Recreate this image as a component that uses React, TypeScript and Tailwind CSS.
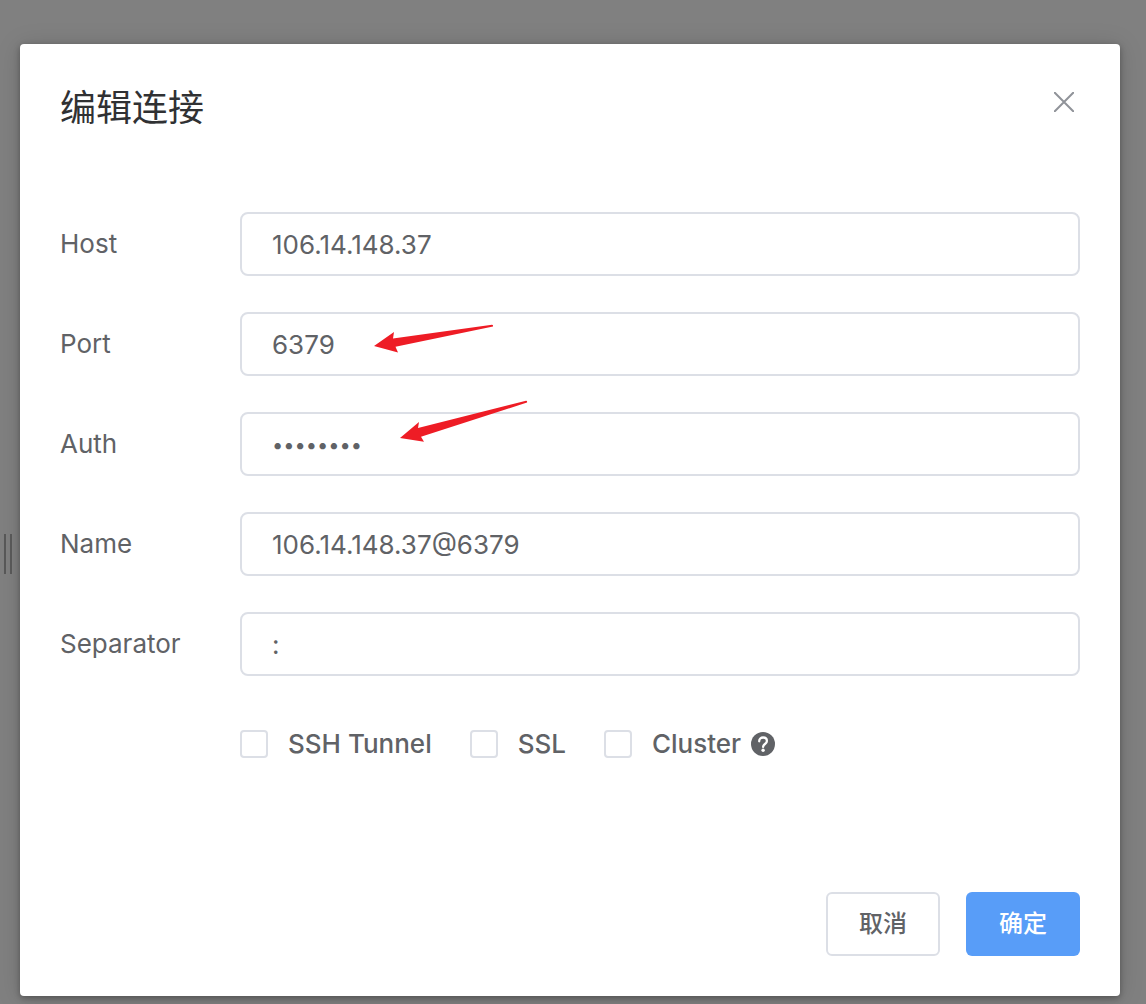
import { useState } from "react";

const fields = [
  { id: "host", label: "Host", type: "text", value: "106.14.148.37" },
  { id: "port", label: "Port", type: "text", value: "6379" },
  { id: "auth", label: "Auth", type: "password", value: "password" },
  { id: "name", label: "Name", type: "text", value: "106.14.148.37@6379" },
  { id: "separator", label: "Separator", type: "text", value: ":" },
];

function PortArrow() {
  return (
    <svg aria-hidden="true" className="pointer-events-none absolute left-[134px] top-3 h-7 w-[120px] overflow-visible" viewBox="0 0 120 28" fill="#ee1c25">
      <path d="M0 22 20 8 19 14.5 118 .7Q119.5.7 119 2.6L21.5 22.8 24 28.5Z" />
    </svg>
  );
}

function AuthArrow() {
  return (
    <svg aria-hidden="true" className="pointer-events-none absolute left-40 -top-3 h-[42px] w-32 overflow-visible" viewBox="0 0 128 42" fill="#ee1c25">
      <path d="M0 38 19 22 18 28 126 .8Q127.5.7 127 2.6L21 36.8 24 41.8Z" />
    </svg>
  );
}

function HelpIcon() {
  return (
    <svg aria-hidden="true" className="ml-2.5 size-6" viewBox="0 0 24 24">
      <circle cx="12" cy="12" r="12" fill="#606266" />
      <path d="M8.2 9.3C8.2 6.9 9.8 5.5 12.1 5.5s3.8 1.4 3.8 3.4c0 1.5-.8 2.3-1.9 3.1-1.2.9-1.9 1.4-1.9 2.9" fill="none" stroke="white" strokeWidth="2.3" strokeLinecap="round" />
      <circle cx="12.1" cy="18.2" r="1.7" fill="white" />
    </svg>
  );
}

function Field({ id, label, type, value }: (typeof fields)[number]) {
  const [text, setText] = useState(value);
  return (
    <div className="flex items-center">
      <label htmlFor={id} className="w-[180px] shrink-0 text-[26px] leading-11">
        {label}
      </label>
      <div className="relative min-w-0 flex-1">
        <input
          id={id}
          type={type}
          value={text}
          onChange={(e) => setText(e.target.value)}
          className={`block h-16 w-full rounded-lg border-2 border-[#dcdfe6] bg-white px-[30px] outline-none focus:border-[#589df8] ${
            type === "password" ? "pt-0.5 text-xl" : "text-[26px]"
          }`}
        />
        {id === "port" && <PortArrow />}
        {id === "auth" && <AuthArrow />}
      </div>
    </div>
  );
}

function Check({ label, help }: { label: string; help?: boolean }) {
  return (
    <label className="flex items-center text-[26px] leading-11 font-medium">
      <input
        type="checkbox"
        className="mr-5 size-7 shrink-0 appearance-none rounded border-2 border-[#dcdfe6] bg-white checked:border-[#589df8] checked:bg-[#589df8]"
      />
      {label}
      {help && <HelpIcon />}
    </label>
  );
}

export default function App() {
  return (
    <div className="relative min-h-screen bg-[#808080] pt-11 pr-[26px] pb-2 pl-5 font-['Inter','Noto_Sans_CJK_SC',sans-serif] text-[#606266]">
      <div className="absolute top-[534px] left-1 h-10 w-2 border-x-2 border-[#575757]" />
      <form
        role="dialog"
        aria-labelledby="dialog-title"
        onSubmit={(e) => e.preventDefault()}
        className="rounded bg-white p-10 shadow-[0_2px_6px_rgba(0,0,0,0.3),0_2px_24px_rgba(0,0,0,0.15)]"
      >
        <header className="flex items-start justify-between">
          <h1 id="dialog-title" className="text-4xl leading-12 text-[#303133]">
            编辑连接
          </h1>
          <button type="button" aria-label="关闭" className="p-1.5 pt-2">
            <svg className="size-5" viewBox="0 0 20 20" fill="none" stroke="#909399" strokeWidth="2" strokeLinecap="round">
              <path d="M.8.8 19.2 19.2M19.2.8.8 19.2" />
            </svg>
          </button>
        </header>
        <div className="mt-20 flex flex-col gap-9">
          {fields.map((f) => (
            <Field key={f.id} {...f} />
          ))}
          <div className="ml-[180px] flex h-16 items-center gap-[38px]">
            <Check label="SSH Tunnel" />
            <Check label="SSL" />
            <Check label="Cluster" help />
          </div>
        </div>
        <footer className="mt-[116px] flex justify-end gap-[26px]">
          <button type="button" className="h-16 w-[114px] rounded-md border-2 border-[#dcdfe6] bg-white text-2xl font-medium">
            取消
          </button>
          <button type="submit" className="h-16 w-[114px] rounded-md bg-[#589df8] text-2xl font-medium text-white">
            确定
          </button>
        </footer>
      </form>
    </div>
  );
}
